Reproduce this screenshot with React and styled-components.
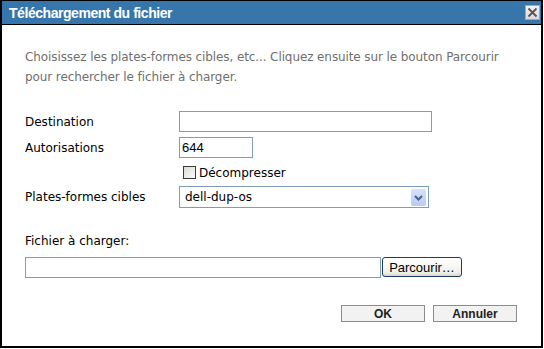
import styled, { createGlobalStyle } from "styled-components";

const Global = createGlobalStyle`
    html, body {
        margin: 0;
        background: #fff;
    }
    body {
        font-family: "DejaVu Sans", sans-serif;
        font-size: 12px;
        color: #000;
    }
`;

const App = () => {
    return (
        <>
            <Global />
            <Dialog>
                <TitleBar>
                    <Title>Téléchargement du fichier</Title>
                    <CloseButton aria-label="Fermer">
                        <svg width="11" height="11" viewBox="0 0 11 11">
                            <path d="M1.5 1.5 L9.5 9.5 M9.5 1.5 L1.5 9.5" stroke="#555" strokeWidth="1.8" />
                        </svg>
                    </CloseButton>
                </TitleBar>
                <Body>
                    <Intro>
                        Choisissez les plates-formes cibles, etc... Cliquez ensuite sur le bouton Parcourir
                        <br />
                        pour rechercher le fichier à charger.
                    </Intro>
                    <Form>
                        <Row>
                            <Label>Destination</Label>
                            <TextInput $width={253} />
                        </Row>
                        <Row $top={5}>
                            <Label>Autorisations</Label>
                            <TextInput $width={74} defaultValue="644" />
                        </Row>
                        <Row $top={8}>
                            <Label />
                            <CheckLabel>
                                <Check />
                                Décompresser
                            </CheckLabel>
                        </Row>
                        <Row $top={7}>
                            <Label>Plates-formes cibles</Label>
                            <Select>
                                <span>dell-dup-os</span>
                                <SelectArrow>
                                    <svg width="15" height="17" viewBox="0 0 15 17">
                                        <path d="M4 7 L7.5 10.5 L11 7" stroke="#4d6185" strokeWidth="2" fill="none" />
                                    </svg>
                                </SelectArrow>
                            </Select>
                        </Row>
                    </Form>
                    <FileLabel>Fichier à charger:</FileLabel>
                    <FileRow>
                        <TextInput $width={356} />
                        <BrowseButton>Parcourir…</BrowseButton>
                    </FileRow>
                    <Actions>
                        <ActionButton>OK</ActionButton>
                        <ActionButton>Annuler</ActionButton>
                    </Actions>
                </Body>
            </Dialog>
        </>
    );
};

const Dialog = styled.div`
    box-sizing: border-box;
    width: 543px;
    height: 348px;
    border: 2px solid #000;
    border-top-width: 1px;
    display: flex;
    flex-direction: column;
    background: #fff;
`;

const TitleBar = styled.div`
    height: 23px;
    border-bottom: 1px solid #000;
    background: #3676ab;
    display: flex;
    align-items: center;
    justify-content: space-between;
    padding: 0 1px 0 7px;
`;

const Title = styled.div`
    color: #fff;
    font-family: "Liberation Sans", sans-serif;
    font-weight: bold;
    font-size: 14px;
    letter-spacing: -0.45px;
`;

const CloseButton = styled.div`
    box-sizing: border-box;
    width: 15px;
    height: 15px;
    background: linear-gradient(#f4f4f4, #dadada);
    border: 1px solid #a8a8a8;
    display: flex;
    align-items: center;
    justify-content: center;
`;

const Body = styled.div`
    flex: 1;
    padding: 22px 24px 0 23px;
    display: flex;
    flex-direction: column;
`;

const Intro = styled.p`
    margin: 0;
    color: #6f6f6f;
    line-height: 20px;
    letter-spacing: -0.1px;
`;

const Form = styled.div`
    margin-top: 24px;
    display: flex;
    flex-direction: column;
`;

const Row = styled.div`
    display: flex;
    align-items: center;
    margin-top: ${(p) => p.$top || 0}px;
`;

const Label = styled.div`
    width: 154px;
    flex: none;
`;

const TextInput = styled.input`
    box-sizing: border-box;
    width: ${(p) => p.$width}px;
    height: 21px;
    margin: 0;
    padding: 0 2px;
    border: 1px solid #7f9db9;
    font-family: "Liberation Sans", sans-serif;
    font-size: 13px;
    color: #000;
    outline: none;
`;

const CheckLabel = styled.label`
    display: flex;
    align-items: center;
    gap: 3px;
    margin-left: 4px;
    height: 13px;
`;

const Check = styled.span`
    box-sizing: border-box;
    width: 13px;
    height: 13px;
    border: 1px solid #3a3a3a;
    background: linear-gradient(135deg, #dcdcd6, #fbfbf9);
`;

const Select = styled.div`
    box-sizing: border-box;
    width: 250px;
    height: 22px;
    border: 1px solid #7f9db9;
    display: flex;
    align-items: center;
    justify-content: space-between;
    padding: 0 2px 0 5px;
`;

const SelectArrow = styled.span`
    width: 15px;
    height: 17px;
    border-radius: 2px;
    background: linear-gradient(#d6e2fd, #b6cbf6);
    display: flex;
`;

const FileLabel = styled.div`
    margin-top: 23px;
    line-height: 20px;
`;

const FileRow = styled.div`
    margin-top: 6px;
    display: flex;
    align-items: flex-start;
    gap: 1px;
`;

const BrowseButton = styled.button`
    box-sizing: border-box;
    width: 80px;
    height: 20px;
    margin: 0;
    padding: 0;
    border: 1px solid #1c3d5e;
    border-radius: 3px;
    background: linear-gradient(#ffffff, #f0f0ea 80%, #d8d6cc);
    font-family: "Liberation Sans", sans-serif;
    font-size: 13px;
    color: #000;
`;

const Actions = styled.div`
    margin-top: 27px;
    display: flex;
    justify-content: flex-end;
    gap: 8px;
`;

const ActionButton = styled.button`
    box-sizing: border-box;
    width: 84px;
    height: 17px;
    margin: 0;
    padding: 0;
    border: 1px solid #8c8c8c;
    background: #f2f2f2;
    font-family: "Liberation Sans", sans-serif;
    font-weight: bold;
    font-size: 12px;
    color: #222;
`;

export default App;
